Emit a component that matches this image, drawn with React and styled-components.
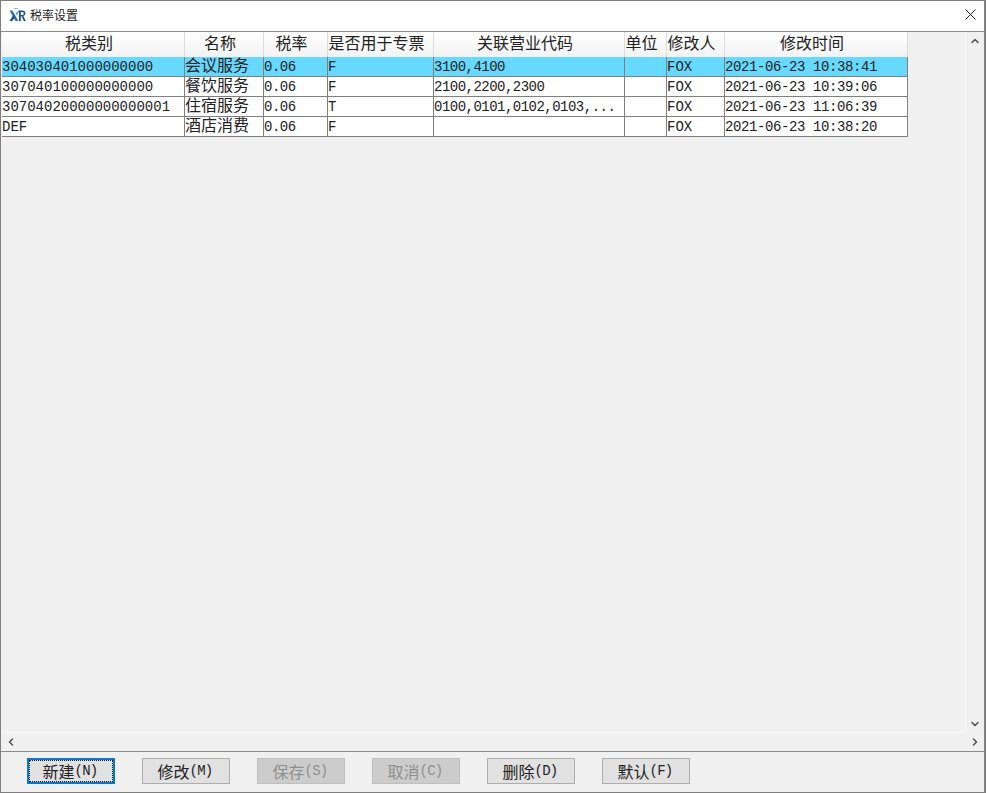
import React from 'react'
import styled, { createGlobalStyle } from 'styled-components'
import { ChevronUp, ChevronDown, ChevronLeft, ChevronRight } from 'lucide-react'

const GlobalStyle = createGlobalStyle`
    html, body {
        margin: 0;
        padding: 0;
        background: #fff;
    }
`

const CJK = `"Liberation Mono", "Noto Sans CJK SC", monospace`
const COLS = '183px 79px 64px 106px 191px 42px 58px 183px'

const Window = styled.div`
    width: 986px;
    height: 793px;
    box-sizing: border-box;
    border: 1px solid #7f7f7f;
    border-right-width: 2px;
    background: #f0f0f0;
    display: flex;
    flex-direction: column;
    font-family: ${CJK};
    color: #111;
`
const TitleBar = styled.div`
    height: 31px;
    flex: none;
    background: #fff;
    border-bottom: 1px solid #8a8a8a;
    display: flex;
    align-items: center;
    padding: 0 8px 3px 8px;
    box-sizing: border-box;
    gap: 4px;
`
const TitleText = styled.span`
    flex: 1;
    font-size: 12px;
    font-family: "Noto Sans CJK SC", sans-serif;
    color: #222;
`
const CloseIcon = styled.svg`
    width: 11px;
    height: 11px;
    display: block;
`
const Body = styled.div`
    flex: 1;
    min-height: 0;
    display: grid;
    grid-template-columns: 1fr 18px;
    grid-template-rows: 1fr 18px;
`
const GridArea = styled.div`
    padding-left: 1px;
    border-right: 1px solid #f8f8f8;
    border-bottom: 1px solid #f8f8f8;
    overflow: hidden;
`
const VScroll = styled.div`
    display: flex;
    flex-direction: column;
    justify-content: space-between;
    align-items: center;
    padding: 3px 0 3px;
    color: #505050;
`
const HScroll = styled.div`
    grid-column: 1 / span 2;
    display: flex;
    justify-content: space-between;
    align-items: center;
    padding: 0 3px 0 4px;
    color: #505050;
`
const HeadRow = styled.div`
    display: grid;
    grid-template-columns: ${COLS};
    width: 906px;
    height: 25px;
    background: linear-gradient(#ffffff, #f2f2f2);
`
const HeadCell = styled.div`
    font-size: 16px;
    line-height: 24px;
    padding: 1px 8px 0 0;
    text-align: center;
    white-space: nowrap;
    overflow: hidden;
    color: #222;
    border-right: 1px solid #dcdcdc;
    box-sizing: border-box;
`
const Row = styled.div`
    display: grid;
    grid-template-columns: ${COLS};
    width: 906px;
    height: 20px;
    box-sizing: border-box;
    border-bottom: 1px solid #808080;
    background: ${p => (p.$selected ? '#66d9ff' : '#fff')};
`
const Cell = styled.div`
    font-size: ${p => (p.$cjk ? '16px' : '14px')};
    letter-spacing: ${p => p.$tight || 0}px;
    line-height: 19px;
    padding-top: 1px;
    white-space: nowrap;
    overflow: hidden;
    box-sizing: border-box;
    color: #222;
    border-right: 1px solid #808080;
`
const Footer = styled.div`
    height: 41px;
    flex: none;
    box-sizing: border-box;
    border-top: 1px solid #8a8a8a;
    display: flex;
    gap: 27px;
    padding: 6px 0 0 26px;
`
const Button = styled.button`
    width: 88px;
    height: 26px;
    box-sizing: border-box;
    padding: 0 2px 0 0;
    font-family: ${CJK};
    font-size: 14px;
    letter-spacing: -0.7px;
    display: flex;
    align-items: center;
    justify-content: center;
    background: ${p => (p.disabled ? '#cccccc' : '#e1e1e1')};
    color: ${p => (p.disabled ? '#8f8f8f' : '#222')};
    border: ${p => (p.$focus ? '2px solid #0078d7' : p.disabled ? '1px solid #bfbfbf' : '1px solid #adadad')};
    outline: ${p => (p.$focus ? '1px dotted #111' : 'none')};
    outline-offset: ${p => (p.$focus ? '-3px' : '0')};
`
const BtnCjk = styled.span`
    font-size: 16px;
    letter-spacing: 0;
`

const Logo = () => (
    <svg width="17" height="16" viewBox="0 0 17 16">
        <path d="M5 1.5 L9 1.5" stroke="#8ab8e0" strokeWidth="1" fill="none" />
        <path d="M0.5 3.5 L3.4 3.5 L9.4 14 L6.5 14 Z" fill="#2a6fb8" />
        <path d="M0.5 14 L4.4 8 L5.9 10.4 L3.2 14 Z" fill="#1f4f8f" />
        <path d="M6.6 6.6 L9.2 3.5 L10.8 3.5 L7.6 8.4 Z" fill="#5aa0d8" />
        <path d="M10 14 L10 3.5 L13.4 3.5 Q16.4 3.5 16.4 6.3 Q16.4 8.4 14.4 9 L16.8 14 L14.8 14 L12.6 9.3 L11.8 9.3 L11.8 14 Z M11.8 5 L11.8 7.9 L13.2 7.9 Q14.7 7.9 14.7 6.4 Q14.7 5 13.2 5 Z" fill="#1f4f8f" />
    </svg>
)

const headers = ['税类别', '名称', '税率', '是否用于专票', '关联营业代码', '单位', '修改人', '修改时间']

const rows = [
    ['304030401000000000', '会议服务', '0.06', 'F', '3100,4100', '', 'FOX', '2021-06-23 10:38:41'],
    ['307040100000000000', '餐饮服务', '0.06', 'F', '2100,2200,2300', '', 'FOX', '2021-06-23 10:39:06'],
    ['30704020000000000001', '住宿服务', '0.06', 'T', '0100,0101,0102,0103,...', '', 'FOX', '2021-06-23 11:06:39'],
    ['DEF', '酒店消费', '0.06', 'F', '', '', 'FOX', '2021-06-23 10:38:20'],
]

// the original font sets punctuation narrower than digits
const tightness = { 2: -0.5, 4: -0.52, 7: -0.4 }

const buttons = [
    { cn: '新建', key: '(N)', focus: true },
    { cn: '修改', key: '(M)' },
    { cn: '保存', key: '(S)', disabled: true },
    { cn: '取消', key: '(C)', disabled: true },
    { cn: '删除', key: '(D)' },
    { cn: '默认', key: '(F)' },
]

const App = () => {
    return (
        <Window>
            <GlobalStyle />
            <TitleBar>
                <Logo />
                <TitleText>税率设置</TitleText>
                <CloseIcon viewBox="0 0 11 11">
                    <path d="M0.5 0.5 L10.5 10.5 M10.5 0.5 L0.5 10.5" stroke="#222" strokeWidth="1" fill="none" />
                </CloseIcon>
            </TitleBar>
            <Body>
                <GridArea>
                    <HeadRow>
                        {headers.map(h => <HeadCell key={h}>{h}</HeadCell>)}
                    </HeadRow>
                    {rows.map((r, i) => (
                        <Row key={r[0]} $selected={i === 0}>
                            {r.map((c, j) => <Cell key={j} $cjk={j === 1} $tight={tightness[j]}>{c}</Cell>)}
                        </Row>
                    ))}
                </GridArea>
                <VScroll>
                    <ChevronUp size={12} strokeWidth={3} />
                    <ChevronDown size={12} strokeWidth={3} />
                </VScroll>
                <HScroll>
                    <ChevronLeft size={12} strokeWidth={3} />
                    <ChevronRight size={12} strokeWidth={3} />
                </HScroll>
            </Body>
            <Footer>
                {buttons.map(b => (
                    <Button key={b.cn} disabled={b.disabled} $focus={b.focus}>
                        <BtnCjk>{b.cn}</BtnCjk>{b.key}
                    </Button>
                ))}
            </Footer>
        </Window>
    )
}

export default App
